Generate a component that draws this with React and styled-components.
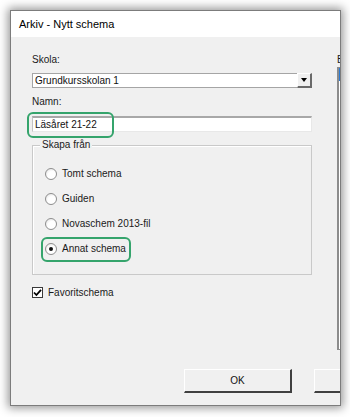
import React from "react";
import styled, { createGlobalStyle } from "styled-components";

const GlobalStyle = createGlobalStyle`
  html, body {
    margin: 0;
    padding: 0;
    background: #ffffff;
  }
  * {
    box-sizing: border-box;
  }
`;

const Page = styled.div`
  width: 350px;
  height: 417px;
  padding: 10px 0 0 10px;
  background: #ffffff;
  font-family: "Liberation Sans", Arial, sans-serif;
  overflow: hidden;
`;

const Window = styled.div`
  width: 331px;
  height: 396px;
  display: flex;
  flex-direction: column;
  border: 1px solid #7c7c7c;
  box-shadow: 0 0 9px 2px rgba(0, 0, 0, 0.42);
  overflow: hidden;
  background: #f0f0f0;
`;

const TitleBar = styled.div`
  height: 26px;
  flex-shrink: 0;
  display: flex;
  align-items: center;
  padding-left: 8px;
  background: #ffffff;
  font-size: 11px;
  color: #000;
`;

const Body = styled.div`
  flex: 1;
  display: flex;
  flex-direction: column;
  padding-bottom: 12px;
`;

const Content = styled.div`
  display: flex;
  padding: 17px 0 0 21px;
`;

const LeftColumn = styled.div`
  width: 280px;
  flex-shrink: 0;
  display: flex;
  flex-direction: column;
`;

const RightColumn = styled.div`
  width: 160px;
  flex-shrink: 0;
  margin-left: 25px;
  display: flex;
  flex-direction: column;
`;

const Label = styled.div`
  height: 12px;
  line-height: 12px;
  font-size: 10px;
  color: #1a1a1a;
  white-space: nowrap;
  margin-top: ${(p) => p.$top || 0}px;
`;

const Combo = styled.div`
  margin-top: 7px;
  height: 15px;
  display: flex;
  align-items: center;
  background: #ffffff;
  border: 1px solid #a5a5a5;
  font-size: 10px;
  color: #111;
  padding-left: 2px;
`;

const ComboText = styled.span`
  flex: 1;
`;

const DropButton = styled.div`
  width: 15px;
  height: 15px;
  margin-right: -1px;
  display: flex;
  align-items: center;
  justify-content: center;
  background: #f0f0f0;
  border-top: 1px solid #ffffff;
  border-left: 1px solid #ffffff;
  border-right: 2px solid #6a6a6a;
  border-bottom: 2px solid #6a6a6a;
`;

const Arrow = styled.div`
  width: 0;
  height: 0;
  border-left: 3px solid transparent;
  border-right: 3px solid transparent;
  border-top: 4px solid #000;
`;

const Field = styled.div`
  position: relative;
  margin-top: 8px;
  height: 16px;
  display: flex;
  align-items: center;
  padding-left: 2px;
  background: #ffffff;
  border-top: 2px solid #a8a8a8;
  border-left: 1px solid #c4c4c4;
  border-right: 1px solid #e8e8e8;
  border-bottom: 1px solid #e8e8e8;
  font-size: 10px;
  color: #111;
`;

const Highlight = styled.div`
  position: absolute;
  left: ${(p) => p.$left}px;
  top: ${(p) => p.$top}px;
  width: ${(p) => p.$width}px;
  height: ${(p) => p.$height}px;
  border: 2px solid #35a46c;
  border-radius: 6px;
  pointer-events: none;
`;

const GroupBox = styled.div`
  position: relative;
  margin-top: 13px;
  height: 130px;
  border: 1px solid #c9c9c9;
  box-shadow: inset 1px 1px 0 #ffffff;
  padding: 15px 0 0 12px;
  display: flex;
  flex-direction: column;
`;

const Legend = styled.span`
  position: absolute;
  top: -7px;
  left: 7px;
  padding: 0 2px;
  background: #f0f0f0;
  font-size: 10px;
  line-height: 12px;
  color: #1a1a1a;
`;

const RadioRow = styled.div`
  position: relative;
  height: 25px;
  display: flex;
  align-items: center;
  font-size: 10px;
  color: #1a1a1a;
`;

const RadioCircle = styled.span`
  width: 12px;
  height: 12px;
  flex-shrink: 0;
  margin-right: 5px;
  border-radius: 50%;
  border: 1px solid #8e8e8e;
  background: radial-gradient(circle at 60% 65%, #ffffff 45%, #dcdcdc 100%);
  display: flex;
  align-items: center;
  justify-content: center;

  &::after {
    content: "";
    width: 4px;
    height: 4px;
    border-radius: 50%;
    background: ${(p) => (p.$checked ? "#111" : "transparent")};
  }
`;

const CheckRow = styled.div`
  margin-top: 11px;
  height: 12px;
  display: flex;
  align-items: center;
  font-size: 10px;
  color: #1a1a1a;
`;

const CheckBox = styled.span`
  width: 11px;
  height: 11px;
  margin-right: 5px;
  border: 1px solid #3a3a3a;
  background: #ffffff;
  display: flex;
  align-items: center;
  justify-content: center;
`;

const ListBox = styled.div`
  margin-top: 1px;
  height: 283px;
  border: 1px solid #8c8c8c;
  border-left-width: 2px;
  background: #ffffff;
`;

const ListItem = styled.div`
  height: 13px;
  background: ${(p) => (p.$selected ? "#2a7bd6" : "transparent")};
`;

const Footer = styled.div`
  margin-top: auto;
  display: flex;
  gap: 22px;
  padding-left: 173px;
`;

const Button = styled.div`
  width: 108px;
  height: 24px;
  flex-shrink: 0;
  display: flex;
  align-items: center;
  justify-content: center;
  background: #f0f0f0;
  border-top: 1px solid #ffffff;
  border-left: 1px solid #ffffff;
  border-right: 2px solid #404040;
  border-bottom: 2px solid #404040;
  font-size: 10px;
  color: #111;
`;

const radios = [
  { label: "Tomt schema" },
  { label: "Guiden" },
  { label: "Novaschem 2013-fil" },
  { label: "Annat schema", checked: true, marked: true },
];

export default function App() {
  return (
    <Page>
      <GlobalStyle />
      <Window>
        <TitleBar>Arkiv - Nytt schema</TitleBar>
        <Body>
          <Content>
            <LeftColumn>
              <Label>Skola:</Label>
              <Combo>
                <ComboText>Grundkursskolan 1</ComboText>
                <DropButton>
                  <Arrow />
                </DropButton>
              </Combo>
              <Label $top={8}>Namn:</Label>
              <Field>
                Läsåret 21-22
                <Highlight $left={-6} $top={-6} $width={87} $height={26} />
              </Field>
              <GroupBox>
                <Legend>Skapa från</Legend>
                {radios.map((r) => (
                  <RadioRow key={r.label}>
                    <RadioCircle $checked={r.checked} />
                    {r.label}
                    {r.marked && (
                      <Highlight $left={-4} $top={1} $width={90} $height={25} />
                    )}
                  </RadioRow>
                ))}
              </GroupBox>
              <CheckRow>
                <CheckBox>
                  <svg width="9" height="9" viewBox="0 0 9 9">
                    <path d="M1 4.5 L3.4 7 L8 1.8" fill="none" stroke="#000" strokeWidth="1.8" />
                  </svg>
                </CheckBox>
                Favoritschema
              </CheckRow>
            </LeftColumn>
            <RightColumn>
              <Label>Befintliga scheman:</Label>
              <ListBox>
                <ListItem $selected />
              </ListBox>
            </RightColumn>
          </Content>
          <Footer>
            <Button>OK</Button>
            <Button>Avbryt</Button>
          </Footer>
        </Body>
      </Window>
    </Page>
  );
}
